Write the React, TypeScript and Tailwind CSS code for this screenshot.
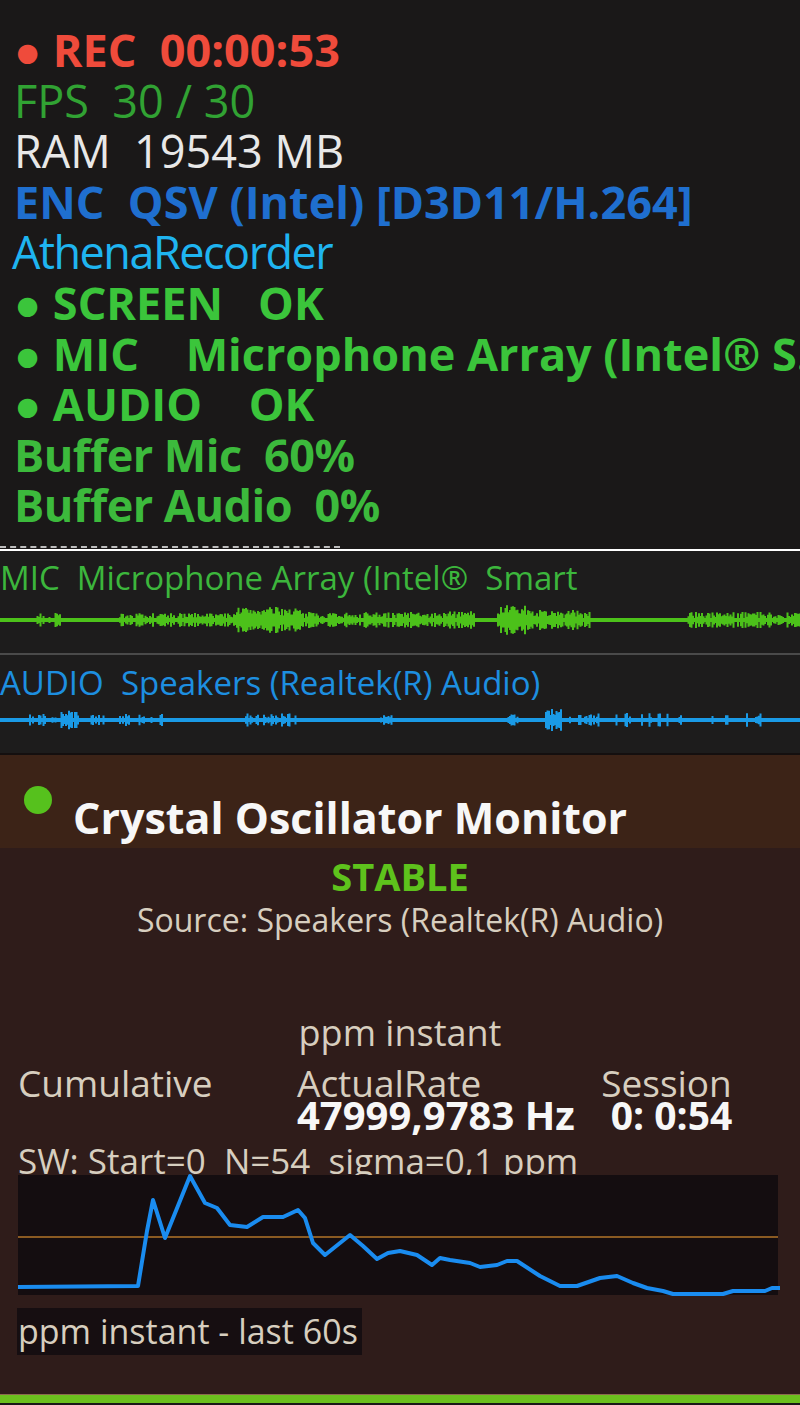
import { useMemo } from 'react'

// seeded prng so the wave forms stay the same on every render
function mulberry32(seed: number) {
  let a = seed
  return () => {
    a |= 0
    a = (a + 0x6d2b79f5) | 0
    let t = Math.imul(a ^ (a >>> 15), 1 | a)
    t = (t + Math.imul(t ^ (t >>> 7), 61 | t)) ^ t
    return ((t ^ (t >>> 14)) >>> 0) / 4294967296
  }
}

type Burst = [number, number, number, number] // from, to, amplitude, density

function wavePath(bursts: Burst[], center: number, seed: number) {
  const rnd = mulberry32(seed)
  let d = ''
  for (let x = 0; x <= 800; x += 1.5) {
    const r = rnd()
    const r2 = rnd()
    let amp = 0
    for (const [from, to, a, dens] of bursts) {
      if (x >= from && x <= to && r2 < dens) amp = Math.max(amp, a * (0.35 + r * 0.65))
    }
    if (amp > 2.5) d += `M${x} ${(center - amp).toFixed(1)}V${(center + amp).toFixed(1)}`
  }
  return d
}

const micBursts: Burst[] = [
  [36, 62, 7, 0.6],
  [120, 235, 7, 0.85],
  [235, 300, 13, 1],
  [300, 420, 8, 0.85],
  [420, 475, 9, 0.9],
  [498, 528, 15, 1],
  [528, 590, 10, 0.9],
  [688, 800, 8, 0.8],
]

const audioBursts: Burst[] = [
  [30, 60, 6, 0.45],
  [60, 80, 11, 0.9],
  [90, 165, 6, 0.35],
  [245, 300, 7, 0.5],
  [380, 400, 5, 0.5],
  [508, 520, 7, 0.7],
  [545, 562, 11, 1],
  [570, 800, 7, 0.18],
]

function Wave({ bursts, color, height, seed }: { bursts: Burst[]; color: string; height: number; seed: number }) {
  const c = height / 2
  const d = useMemo(() => wavePath(bursts, c, seed), [bursts, c, seed])
  return (
    <svg width={800} height={height} viewBox={`0 0 800 ${height}`} className="block">
      <rect x={0} y={c - 2} width={800} height={4} fill={color} />
      <path d={d} stroke={color} strokeWidth={2} />
    </svg>
  )
}

const chartPts: [number, number][] = [
  [18, 1289], [138, 1288], [147, 1233], [153, 1202], [165, 1240], [190, 1178], [205, 1205],
  [217, 1210], [230, 1227], [247, 1229], [263, 1219], [283, 1219], [298, 1212], [305, 1220],
  [313, 1245], [325, 1257], [350, 1237], [363, 1248], [377, 1261], [388, 1255], [400, 1253],
  [417, 1257], [432, 1267], [440, 1260], [450, 1262], [470, 1265], [480, 1269], [497, 1267],
  [507, 1263], [517, 1263], [540, 1278], [560, 1288], [577, 1288], [600, 1280], [617, 1278],
  [633, 1285], [647, 1290], [663, 1293], [673, 1296], [723, 1296], [733, 1293], [765, 1293],
  [772, 1290], [780, 1290],
]

function Chart() {
  const pts = chartPts.map(([x, y]) => `${x - 18},${y - 1177}`).join(' ')
  return (
    <svg width={762} height={122} viewBox="0 0 762 122" className="block overflow-visible">
      <rect x={0} y={0} width={760} height={120} fill="#140d10" />
      <line x1={0} x2={760} y1={62} y2={62} stroke="#8a5a22" strokeWidth={2} />
      <polyline points={pts} fill="none" stroke="#1a8cf0" strokeWidth={4} strokeLinejoin="round" />
    </svg>
  )
}

export default function App() {
  return (
    <div className="w-[800px] h-[1405px] overflow-hidden bg-[#1a1818] font-['Open_Sans','Noto_Sans',sans-serif]">
      {/* status lines */}
      <div className="pt-[25px] pl-[14px] text-[45px] leading-[50.6px] whitespace-pre overflow-hidden">
        <div className="font-bold text-[#ef4b3b]">● REC  00:00:53</div>
        <div className="text-[#31a233]">FPS  30 / 30</div>
        <div className="text-[#e8e8e8]">RAM  19543 MB</div>
        <div className="font-bold text-[#1f6fcf]">ENC  QSV (Intel) [D3D11/H.264]</div>
        <div className="-ml-[2px] tracking-[-1.5px] text-[#1fb4f0]">AthenaRecorder</div>
        <div className="font-bold text-[#3bc53b]">● SCREEN   OK</div>
        <div className="font-bold text-[#3bc53b]">● MIC    Microphone Array (Intel® S...</div>
        <div className="font-bold text-[#3bc53b]">● AUDIO    OK</div>
        <div className="font-bold tracking-[-0.5px] text-[#3cba3c]">Buffer Mic  60%</div>
        <div className="font-bold tracking-[-0.5px] text-[#3cba3c]">Buffer Audio  0%</div>
      </div>

      <div className="mt-[15px] w-[340px] border-t-2 border-dashed border-[#bdbdbd]" />
      <div className="mt-[1px] h-[2px] bg-white" />

      {/* meters */}
      <div className="bg-[#1d1c1c] whitespace-pre text-[33px]">
        <div className="pt-[9px] h-[102px]">
          <div className="leading-[36px] text-[#3cb63c]">MIC  Microphone Array (Intel®  Smart</div>
          <Wave bursts={micBursts} color="#4cc11a" height={48} seed={7} />
        </div>
        <div className="h-[2px] bg-[#4a4a4a]" />
        <div className="pt-[10px] h-[98px]">
          <div className="leading-[36px] text-[#1d8fe0]">AUDIO  Speakers (Realtek(R) Audio)</div>
          <Wave bursts={audioBursts} color="#1a9ae6" height={38} seed={11} />
        </div>
      </div>
      <div className="h-[2px] bg-[#140f0f]" />

      {/* oscillator panel */}
      <div className="h-[93px] bg-[#3c2317] flex items-start pl-[24px]">
        <div className="mt-[31px] w-[28px] h-[28px] rounded-full bg-[#56c11d]" />
        <div className="ml-[21px] mt-[39px] text-[43px] leading-[48px] font-bold text-[#f7f7f7]">
          Crystal Oscillator Monitor
        </div>
      </div>
      <div className="h-[546px] bg-[#2f1c1a] text-[#d7cebf]">
        <div className="pt-[6px] text-center text-[38px] leading-[44px] font-bold text-[#5ec21c]">STABLE</div>
        <div className="mt-[2px] text-center text-[32px] leading-[40px]">Source: Speakers (Realtek(R) Audio)</div>
        <div className="mt-[71px] text-center text-[36px] leading-[44px]">ppm instant</div>
        <div className="mt-[10px] flex text-[37px] leading-[36px]">
          <div className="ml-[18px] w-[279px]">Cumulative</div>
          <div className="w-[303px]">
            <div>ActualRate</div>
            <div className="text-[40px] leading-[28px] font-bold text-[#f7f7f7]">47999,9783 Hz</div>
          </div>
          <div className="w-[133px] flex flex-col items-center">
            <div>Session</div>
            <div className="pl-[10px] text-[39px] leading-[28px] font-bold text-[#f7f7f7]">0: 0:54</div>
          </div>
        </div>
        <div className="mt-[17px] pl-[18px] text-[35px] leading-[30px] whitespace-pre">
          SW: Start=0  N=54  sigma=0,1 ppm
        </div>
        <div className="-mt-[1px] ml-[18px] relative">
          <Chart />
        </div>
        <div className="mt-[11px] ml-[17px] w-[345px] h-[47px] bg-[#160e11] text-[34px] leading-[47px] px-[1px]">
          ppm instant - last 60s
        </div>
      </div>
      <div className="h-[1px] bg-[#8b6b4f]" />
      <div className="h-[8px] bg-[#6cc01e]" />
    </div>
  )
}
